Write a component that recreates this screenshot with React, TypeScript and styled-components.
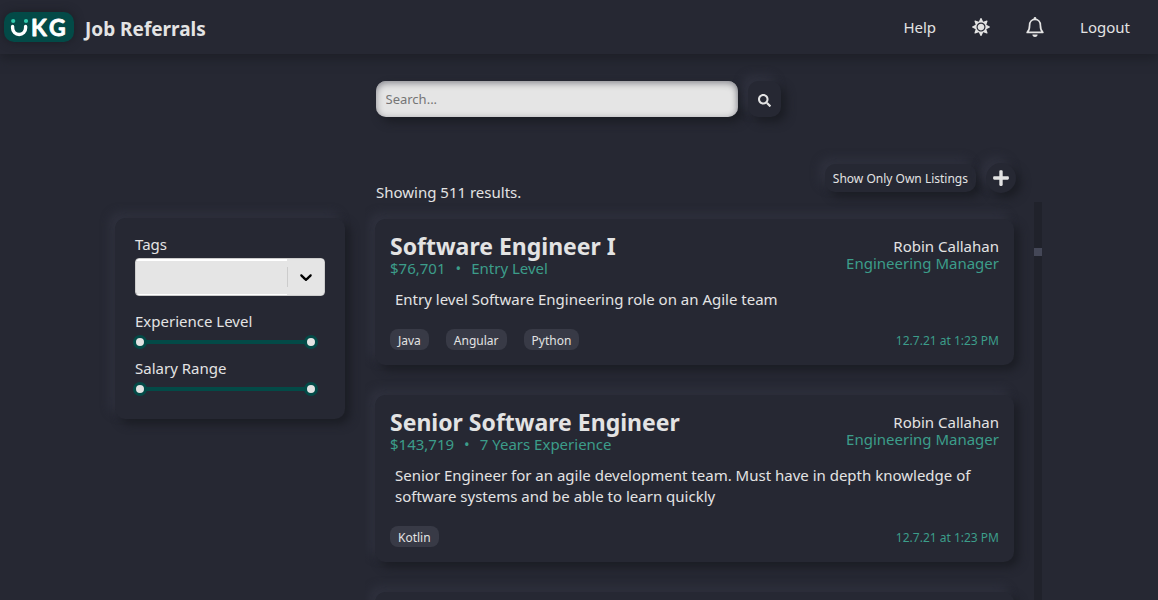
import React from "react";
import styled, { createGlobalStyle } from "styled-components";
import { FaPlus, FaSearch, FaSun } from "react-icons/fa";

const color = {
  page: "#262833",
  text: "#e3e3e3",
  accent: "#3c9d8a",
  deep: "#034a47",
  field: "#e5e5e5",
  tag: "#383a46",
  track: "#20222b",
  thumb: "#444757",
};

const raised = "5px 5px 10px #1b1d24, -5px -5px 10px #30323f";

const GlobalStyle = createGlobalStyle`
  * { box-sizing: border-box; }
  body {
    margin: 0;
    background: ${color.page};
    color: ${color.text};
    font-family: "Noto Sans", "Open Sans", sans-serif;
    font-size: 15px;
    line-height: 20px;
  }
  button, input, select { font: inherit; color: inherit; }
  h1, h2, p, ul { margin: 0; padding: 0; }
`;

const Page = styled.div`
  display: flex;
  flex-direction: column;
  height: 100vh;
  overflow: hidden;
`;

const Header = styled.header`
  display: flex;
  align-items: center;
  justify-content: space-between;
  flex: none;
  height: 54px;
  padding: 0 28px 0 4px;
  box-shadow: 0 5px 10px #1e2028;
`;

const Brand = styled.a`
  display: flex;
  align-items: center;
  gap: 11px;
  color: inherit;
  text-decoration: none;
`;

const Logo = styled.svg`
  width: 70px;
  height: 30px;
  border-radius: 10px;
  background: ${color.deep};
  box-shadow: 0 0 10px #1b1d24;
`;

const SiteName = styled.h1`
  padding-top: 4px;
  font-size: 19px;
  line-height: 24px;
  font-weight: 700;
`;

const Nav = styled.nav`
  display: flex;
  align-items: center;
  gap: 36px;
`;

const NavLink = styled.a`
  color: inherit;
  text-decoration: none;
`;

const IconButton = styled.button`
  display: flex;
  padding: 0;
  border: 0;
  background: none;
  cursor: pointer;
`;

const SearchForm = styled.form`
  display: flex;
  flex: none;
  justify-content: center;
  gap: 10px;
  padding: 27px 22px 0 20px;
`;

const SearchBox = styled.input`
  width: 362px;
  height: 36px;
  padding: 0 10px;
  border: 0;
  border-radius: 10px;
  background: ${color.field};
  color: #222;
  font-size: 13px;
  box-shadow: inset 0 2px 7px #85858c, 5px 5px 10px #1b1d24;
  &::placeholder { color: #757575; }
`;

const RaisedButton = styled.button<{ $shape: "square" | "pill" | "round" }>`
  display: flex;
  align-items: center;
  justify-content: center;
  width: ${(p) => ({ square: "33px", pill: "auto", round: "30px" })[p.$shape]};
  height: ${(p) => ({ square: "36px", pill: "28px", round: "30px" })[p.$shape]};
  padding: ${(p) => ({ square: "2px 0 0", pill: "1px 8px 0", round: "0" })[p.$shape]};
  border: 0;
  border-radius: ${(p) => (p.$shape === "round" ? "50%" : "10px")};
  background: ${color.page};
  box-shadow: ${raised};
  font-size: 12px;
  cursor: pointer;
`;

const Main = styled.main`
  display: flex;
  flex: 1;
  min-height: 0;
  gap: 20px;
  padding: 46px 116px 0 115px;
`;

const Filters = styled.aside`
  flex: none;
  align-self: flex-start;
  width: 230px;
  height: 201px;
  margin-top: 55px;
  padding: 16px 20px;
  border-radius: 10px;
  box-shadow: ${raised};
`;

const Label = styled.label`
  display: block;
  padding-bottom: 2px;
`;

const SelectBox = styled.div`
  display: grid;
  grid-template-columns: 1fr 37px;
  align-items: center;
  height: 38px;
  margin: 2px 0 15px;
  border: 1px solid #ccc;
  border-radius: 4px;
  background: ${color.field};
  overflow: hidden;
`;

const Select = styled.select`
  grid-area: 1 / 1 / 2 / 3;
  height: 36px;
  padding: 0 8px;
  border: solid #fff;
  border-width: 2px 0 1px;
  border-radius: 0;
  background: ${color.field};
  color: #222;
  appearance: none;
`;

const Indicator = styled.span`
  grid-area: 1 / 2;
  display: flex;
  align-items: center;
  height: 36px;
  background: ${color.field};
  pointer-events: none;
  &::before {
    content: "";
    width: 1px;
    height: 20px;
    margin-right: 8px;
    background: #ccc;
  }
`;

const Range = styled.div`
  display: grid;
  align-items: center;
  height: 14px;
  margin: 2px 7px 9px -2px;
  background: linear-gradient(${color.deep}, ${color.deep}) center / 172px 4px no-repeat;
`;

const Thumb = styled.input`
  grid-area: 1 / 1;
  width: 100%;
  height: 14px;
  margin: 0;
  background: none;
  appearance: none;
  pointer-events: none;
  &::-webkit-slider-thumb {
    width: 14px;
    height: 14px;
    border: 3px solid ${color.deep};
    border-radius: 50%;
    background: ${color.text};
    appearance: none;
    pointer-events: auto;
  }
`;

const Results = styled.section`
  display: flex;
  flex: 1;
  flex-direction: column;
  min-width: 0;
`;

const Toolbar = styled.div`
  display: flex;
  flex: none;
  align-items: center;
  gap: 10px;
  height: 30px;
  padding: 0 26px 0 11px;
`;

const Count = styled.p`
  flex: 1;
  padding-top: 28px;
`;

const Scroller = styled.div`
  display: flex;
  flex: 1;
  min-height: 0;
  margin-top: 9px;
`;

const List = styled.ul`
  flex: 1;
  min-width: 0;
  padding: 17px 20px 0 10px;
  list-style: none;
  overflow: hidden;
`;

const Track = styled.div`
  flex: none;
  width: 8px;
  padding-top: 46px;
  background: ${color.track};
  &::before {
    content: "";
    display: block;
    height: 8px;
    background: ${color.thumb};
  }
`;

const Card = styled.li`
  margin-bottom: 30px;
  padding: 15px;
  border-radius: 10px;
  box-shadow: ${raised};
`;

const Row = styled.div<{ $align?: string }>`
  display: flex;
  align-items: ${(p) => p.$align ?? "center"};
  justify-content: space-between;
`;

const Title = styled.h2`
  font-size: 23px;
  line-height: 25px;
  font-weight: 700;
`;

const Accent = styled.p`
  color: ${color.accent};
  line-height: 18px;
`;

const Posted = styled.time`
  padding-top: 2px;
  color: ${color.accent};
  font-size: 12px;
  line-height: 18px;
`;

const Dot = styled.span`
  margin: 0 10px;
`;

const Contact = styled.div`
  padding-top: 4px;
  text-align: right;
  p { line-height: 17px; }
`;

const Description = styled.p`
  padding: 12px 5px 19px;
  line-height: 21px;
`;

const Tags = styled.div`
  display: flex;
  gap: 17px;
`;

const Tag = styled.span`
  padding: 2px 8px 0;
  border-radius: 8px;
  background: ${color.tag};
  font-size: 12px;
  line-height: 19px;
`;

const jobs = [
  { title: "Software Engineer I", pay: "$76,701", level: "Entry Level", text: "Entry level Software Engineering role on an Agile team", tags: ["Java", "Angular", "Python"] },
  { title: "Senior Software Engineer", pay: "$143,719", level: "7 Years Experience", text: "Senior Engineer for an agile development team. Must have in depth knowledge of software systems and be able to learn quickly", tags: ["Kotlin"] },
];

function UkgLogo() {
  return (
    <Logo viewBox="0 0 70 30" role="img" aria-label="UKG">
      <path d="M8.6 14.4v1.6a6.5 6.5 0 0 0 13 0v-1.6" fill="none" stroke="#fff" strokeWidth="3.4" strokeLinecap="round" />
      <circle cx="9.2" cy="9" r="2.1" fill="#2fc9ad" />
      <circle cx="22" cy="9" r="2.1" fill="#2fc9ad" />
      <g fill="#fff" stroke="#fff" strokeWidth="0.8" strokeLinejoin="round" fontFamily="Lato, sans-serif" fontWeight="700" fontSize="23">
        <text x="27" y="24">K</text>
        <text x="45" y="24">G</text>
      </g>
    </Logo>
  );
}

function BellIcon() {
  return (
    <svg width="18" height="20" viewBox="0 0 18 20" fill="currentColor">
      <circle cx="9" cy="1.3" r="1.3" />
      <path d="M1.2 15.4C3 13.6 3.6 12 3.6 8.2 3.6 4.8 5.8 2.4 9 2.4s5.4 2.4 5.4 5.8c0 3.8.6 5.4 2.4 7.2z" fill="none" stroke="currentColor" strokeWidth="1.7" strokeLinejoin="round" />
      <path d="M6.4 17.5h5.2a2.6 2.4 0 0 1-5.2 0z" />
    </svg>
  );
}

function RangeFilter({ label }: { label: string }) {
  const id = label.toLowerCase().replace(" ", "-");
  return (
    <>
      <Label htmlFor={id}>{label}</Label>
      <Range>
        <Thumb id={id} type="range" defaultValue={0} />
        <Thumb type="range" defaultValue={100} aria-label={`${label} maximum`} />
      </Range>
    </>
  );
}

export default function App() {
  return (
    <Page>
      <GlobalStyle />
      <Header>
        <Brand href="#">
          <UkgLogo />
          <SiteName>Job Referrals</SiteName>
        </Brand>
        <Nav>
          <NavLink href="#help">Help</NavLink>
          <IconButton aria-label="Toggle theme"><FaSun size={18} /></IconButton>
          <IconButton aria-label="Notifications"><BellIcon /></IconButton>
          <NavLink href="#logout">Logout</NavLink>
        </Nav>
      </Header>
      <SearchForm>
        <SearchBox type="text" placeholder="Search..." aria-label="Search" />
        <RaisedButton $shape="square" type="button" aria-label="Search jobs"><FaSearch size={13} /></RaisedButton>
      </SearchForm>
      <Main>
        <Filters>
          <Label htmlFor="tags">Tags</Label>
          <SelectBox>
            <Select id="tags" defaultValue=""><option value="" /></Select>
            <Indicator>
              <svg width="20" height="20" viewBox="0 0 20 20" fill="#000">
                <path d="M4.516 7.548c0.436-0.446 1.043-0.481 1.576 0l3.908 3.747 3.908-3.747c0.533-0.481 1.141-0.446 1.574 0 0.436 0.445 0.408 1.197 0 1.615-0.406 0.418-4.695 4.502-4.695 4.502-0.217 0.223-0.502 0.335-0.787 0.335s-0.57-0.112-0.789-0.335c0 0-4.287-4.084-4.695-4.502s-0.436-1.17 0-1.615z" />
              </svg>
            </Indicator>
          </SelectBox>
          <RangeFilter label="Experience Level" />
          <RangeFilter label="Salary Range" />
        </Filters>
        <Results>
          <Toolbar>
            <Count>Showing 511 results.</Count>
            <RaisedButton $shape="pill">Show Only Own Listings</RaisedButton>
            <RaisedButton $shape="round" aria-label="Add listing"><FaPlus size={18} /></RaisedButton>
          </Toolbar>
          <Scroller>
            <List>
              {jobs.map((job) => (
                <Card key={job.title}>
                  <Row $align="flex-start">
                    <div>
                      <Title>{job.title}</Title>
                      <Accent>{job.pay}<Dot>•</Dot>{job.level}</Accent>
                    </div>
                    <Contact>
                      <p>Robin Callahan</p>
                      <Accent>Engineering Manager</Accent>
                    </Contact>
                  </Row>
                  <Description>{job.text}</Description>
                  <Row>
                    <Tags>{job.tags.map((tag) => <Tag key={tag}>{tag}</Tag>)}</Tags>
                    <Posted>12.7.21 at 1:23 PM</Posted>
                  </Row>
                </Card>
              ))}
              <Card aria-busy="true" />
            </List>
            <Track />
          </Scroller>
        </Results>
      </Main>
    </Page>
  );
}
